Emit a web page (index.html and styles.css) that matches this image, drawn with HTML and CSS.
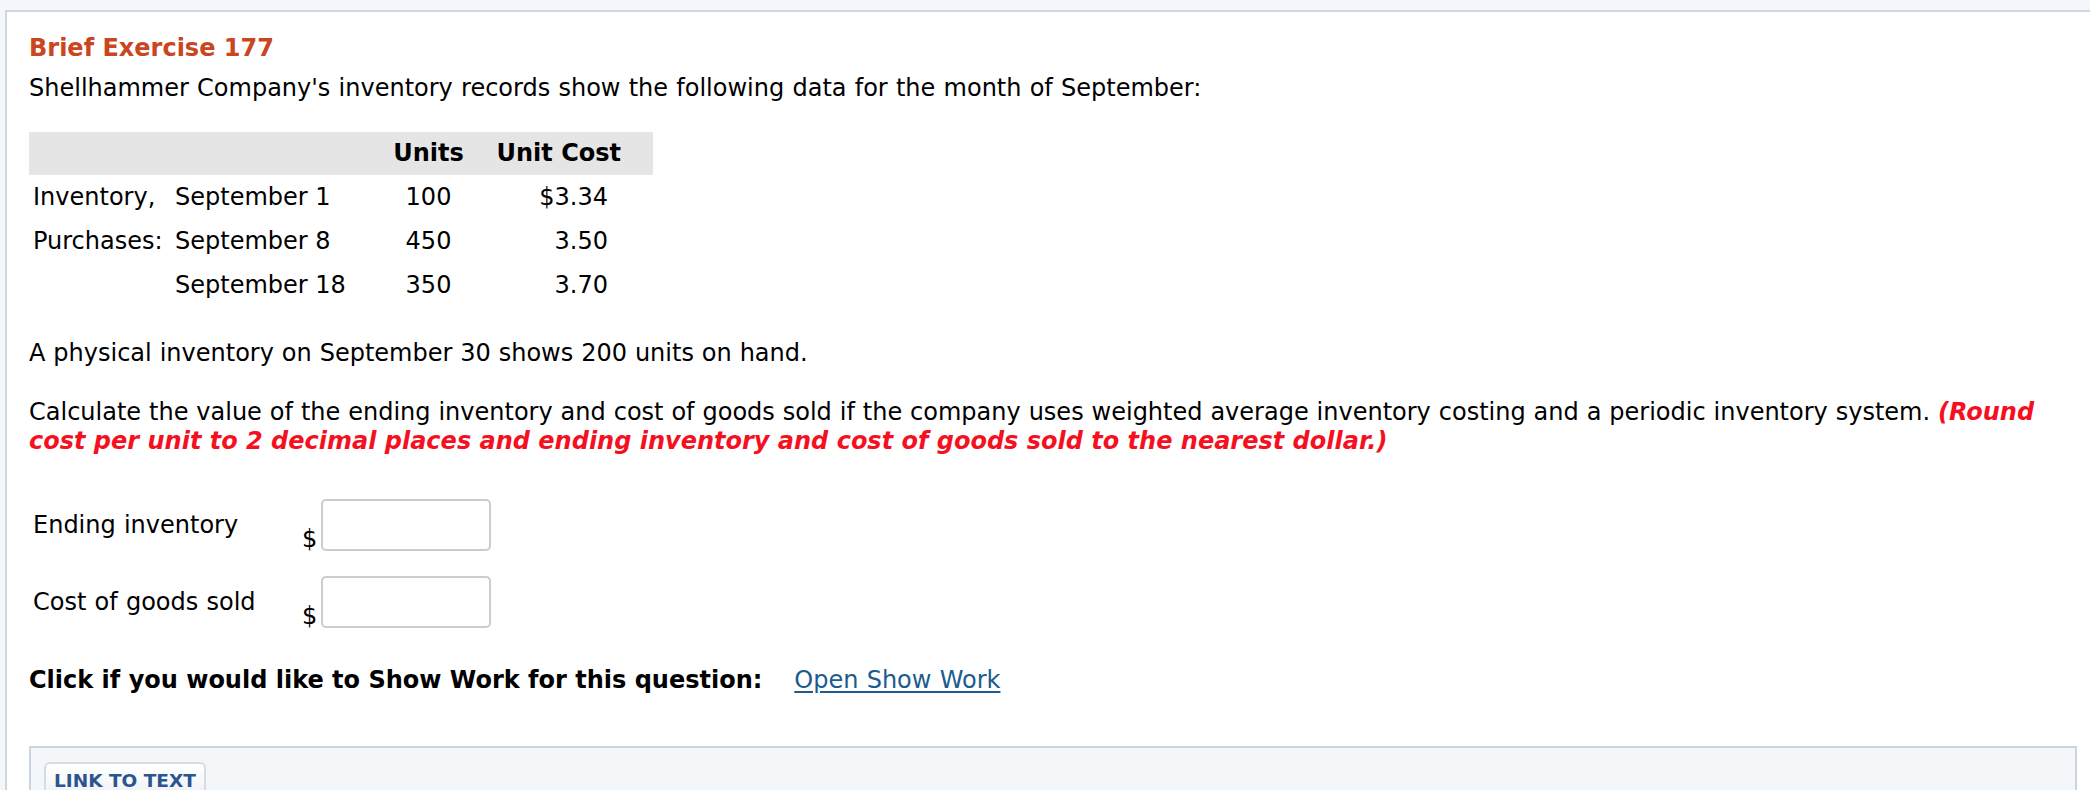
FILE: index.html
```html
<!DOCTYPE html>
<html lang="en">
<head>
<meta charset="utf-8">
<title>Brief Exercise 177</title>
<link rel="stylesheet" href="styles.css">
</head>
<body>
<div class="card">
  <h2 class="title">Brief Exercise 177</h2>
  <p class="intro">Shellhammer Company's inventory records show the following data for the month of September:</p>

  <table class="data">
    <colgroup>
      <col class="c-label">
      <col class="c-date">
      <col class="c-units">
      <col class="c-cost">
    </colgroup>
    <thead>
      <tr>
        <th></th>
        <th></th>
        <th class="units">Units</th>
        <th class="cost">Unit Cost</th>
      </tr>
    </thead>
    <tbody>
      <tr>
        <td>Inventory,</td>
        <td>September 1</td>
        <td class="units">100</td>
        <td class="cost">$3.34</td>
      </tr>
      <tr>
        <td>Purchases:</td>
        <td>September 8</td>
        <td class="units">450</td>
        <td class="cost">3.50</td>
      </tr>
      <tr>
        <td></td>
        <td>September 18</td>
        <td class="units">350</td>
        <td class="cost">3.70</td>
      </tr>
    </tbody>
  </table>

  <p class="para">A physical inventory on September 30 shows 200 units on hand.</p>

  <p class="para">Calculate the value of the ending inventory and cost of goods sold if the company uses weighted average inventory costing and a periodic inventory system. <strong class="note">(Round cost per unit to 2 decimal places and ending inventory and cost of goods sold to the nearest dollar.)</strong></p>

  <div class="answers">
    <div class="answer-row">
      <span class="answer-label">Ending inventory</span>
      <span class="answer-field"><span class="cur">$</span><input class="box" type="text" aria-label="Ending inventory"></span>
    </div>
    <div class="answer-row">
      <span class="answer-label">Cost of goods sold</span>
      <span class="answer-field"><span class="cur">$</span><input class="box" type="text" aria-label="Cost of goods sold"></span>
    </div>
  </div>

  <p class="showwork"><strong>Click if you would like to Show Work for this question:</strong><a class="link" href="#">Open Show Work</a></p>

  <div class="panel">
    <button class="btn" type="button">LINK TO TEXT</button>
  </div>
</div>
</body>
</html>
```

FILE: styles.css
```css
html, body {
  margin: 0;
  padding: 0;
}

body {
  background: #f4f7fa;
  font-family: "DejaVu Sans", Verdana, sans-serif;
  font-size: 24px;
  line-height: 29px;
  color: #000;
  overflow: hidden;
}

.card {
  margin: 10px 0 0 5px;
  border-top: 2px solid #cfd6e2;
  border-left: 2px solid #cfd6e2;
  background: #fff;
  padding: 22px 13px 0 22px;
  min-height: 900px;
}

.title {
  margin: 0;
  font-size: 24px;
  line-height: 29px;
  font-weight: bold;
  color: #c9461e;
}

.intro {
  margin: 11px 0 0;
  word-spacing: 0.6px;
}

.data {
  margin-top: 29px;
  border-collapse: collapse;
  table-layout: fixed;
  width: 624px;
}

.c-label { width: 142px; }
.c-date { width: 199px; }
.c-units { width: 117px; }
.c-cost { width: 166px; }

.data th,
.data td {
  padding: 0 4px;
  text-align: left;
  white-space: nowrap;
  font-weight: normal;
}

.data thead th {
  background: #e5e5e5;
  height: 43px;
  font-weight: bold;
}

.data tbody td {
  height: 44px;
}

.data .units {
  text-align: center;
}

.data th.cost {
  text-align: right;
  padding-right: 32px;
}

.data td.cost {
  text-align: right;
  padding-right: 45px;
}

.para {
  margin: 32px 0 0;
  word-spacing: 0.3px;
}

.para + .para {
  margin-top: 30px;
}

.note {
  color: #f6101f;
  font-style: italic;
  font-weight: bold;
  word-spacing: 0;
}

.answers {
  margin-top: 43px;
  display: flex;
  flex-direction: column;
  gap: 25px;
}

.answer-row {
  display: flex;
  align-items: center;
}

.answer-label {
  width: 269px;
  padding-left: 4px;
  word-spacing: 0.6px;
}

.answer-field {
  display: flex;
  align-items: flex-end;
}

.cur {
  line-height: 24px;
  margin-right: 4px;
}

.box {
  width: 170px;
  height: 52px;
  box-sizing: border-box;
  border: 2px solid #cccccc;
  border-radius: 5px;
  background: #fff;
  margin: 0;
  padding: 0 6px;
  font: inherit;
}

.showwork {
  margin: 38px 0 0;
  display: flex;
  gap: 32px;
}

.link {
  color: #1b5b8e;
  text-decoration: underline;
  text-underline-offset: 3px;
  word-spacing: 0.6px;
}

.panel {
  margin-top: 51px;
  background: #f4f7fa;
  border: 2px solid #ccd4e0;
  padding: 14px 13px;
  height: 80px;
}

.btn {
  font-family: "DejaVu Sans", Verdana, sans-serif;
  font-size: 18.5px;
  font-weight: bold;
  color: #2b5490;
  background: linear-gradient(#ffffff, #eef1f5);
  border: 2px solid #d6dce4;
  border-radius: 6px;
  padding: 6px 8px;
  line-height: 22px;
  letter-spacing: 0;
}
```
